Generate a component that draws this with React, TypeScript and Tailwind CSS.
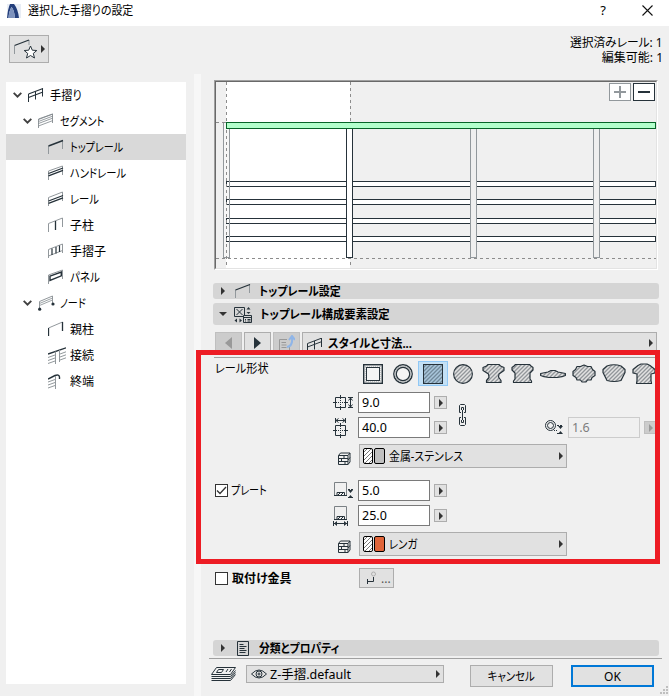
import type { ReactNode } from "react"
import clsx from "clsx"

const INK = "#26323a"
const GREY = "#92989c"

/* ---------- small icons ---------- */

function Svg({ w, h, className, children }: { w: number; h: number; className?: string; children: ReactNode }) {
  return (
    <svg width={w} height={h} viewBox={`0 0 ${w} ${h}`} fill="none" stroke={INK} className={clsx("shrink-0", className)}>
      {children}
    </svg>
  )
}

function Chevron() {
  return (
    <Svg w={9} h={6}>
      <path d="M.7 .9 4.5 4.6 8.3 .9" strokeWidth="1.9" stroke="#404040" />
    </Svg>
  )
}

function RightArrow({ className, fill = "#333" }: { className?: string; fill?: string }) {
  return (
    <svg width="4" height="8" viewBox="0 0 4 8" className={clsx("shrink-0", className)}>
      <path d="M0 0 4 4 0 8Z" fill={fill} />
    </svg>
  )
}

const treeIcons: Record<string, ReactNode> = {
  railing: (
    <>
      <path d="M.5 15V7M14.5 1.500v8M7.500 4v8.500" />
      <path d="M.5 7 15 1.500M.5 10.500 15 5" strokeWidth="1.2" />
    </>
  ),
  segment: (
    <>
      <path d="M.5 15V6L14.5 1v9" stroke={GREY} />
      <path d="M.5 6.500 15 1M.5 8.500 15 3M.5 10.500 15 5M.5 13 15 7.500" stroke="#7d858a" strokeWidth=".8" />
    </>
  ),
  topRail: (
    <>
      <path d="M.5 15V7M14.5 1v9" stroke={GREY} />
      <path d="M.5 7 15 1.500" strokeWidth="1.4" />
    </>
  ),
  handrail: (
    <>
      <path d="M.5 15V6L14.5 1v9" stroke={GREY} />
      <path d="M.5 8.500 15 3M.5 10.800 15 5.300" strokeWidth="1.3" />
    </>
  ),
  rail: (
    <>
      <path d="M.5 15V6.500L14.5 1v9" stroke={GREY} />
      <path d="M.5 10 15 4.500M.5 12.300 15 6.800" strokeWidth="1.3" />
    </>
  ),
  post: (
    <>
      <path d="M.5 15V6.500L14.5 1v9" stroke={GREY} />
      <path d="M7.500 4v9" strokeWidth="1.3" />
    </>
  ),
  baluster: (
    <>
      <path d="M.5 15V6.500L14.5 1v9M.5 13 14.5 7.500" stroke={GREY} />
      <path d="M4 5.500v6.500M8 4v6.500M11.500 2.500v6.500" strokeWidth="1.2" />
    </>
  ),
  panel: (
    <>
      <path d="M.5 15V6L14.5 1v9" stroke={GREY} />
      <path d="M2 7.200 13.300 3v3.800L2 11.400Z" strokeWidth="1.4" />
    </>
  ),
  node: (
    <>
      <path d="M1.500 14V6.500L14.5 1v8" stroke={GREY} />
      <path d="M1.500 8.500 14.5 3M1.500 10.500 14.5 5" stroke={GREY} strokeWidth=".9" />
      <circle cx="1.7" cy="14.2" r="1.6" fill={INK} stroke="none" />
      <circle cx="15" cy="9" r="1.6" fill={INK} stroke="none" />
    </>
  ),
  newel: (
    <>
      <path d="M.5 7 14.5 1" stroke={GREY} />
      <path d="M.5 15V7M14.5 1v9" strokeWidth="1.3" />
    </>
  ),
  joint: (
    <>
      <path d="M0 7 18 .8" strokeWidth="1.4" />
      <path d="M7.500 4.500V17M11.500 3v12" stroke={GREY} />
      <path d="M0 10.500 7 8M0 13.500 7 11M0 16.500 7 14M12 7l6-2.200M12 10l6-2.200M12 13l6-2.200" stroke="#858c90" strokeWidth=".9" />
    </>
  ),
  end: (
    <>
      <path d="M0 6 7 2.500q4-1.500 4.500 1.500v2" strokeWidth="1.4" />
      <path d="M7.500 3v13" stroke={GREY} />
      <path d="M0 9 7 6.500M0 12 7 9.500M0 15 7 12.500" stroke="#858c90" strokeWidth=".9" />
    </>
  ),
}

function BrickIcon() {
  return (
    <Svg w={13} h={13} className="relative top-[2px]">
      <path d="M.5 3.500h9.500v9H.5ZM.5 3.500 2.500 1H12v9l-2 2.500M10 3.500 12 1M.5 6.500H10M.5 9.500H10M6 3.500v3M3.500 6.500v3M7 9.500v3M10 8l2-2.500" strokeWidth="1" />
    </Svg>
  )
}

/* ---------- generic controls ---------- */

function NumberField({ value, disabled }: { value: string; disabled?: boolean }) {
  return (
    <div className="flex items-center gap-1">
      <div
        className={clsx(
          "flex h-[21px] w-[72px] items-center border pl-[3px] text-[12.5px]",
          disabled ? "border-[#ccc] text-[#7d7d7d]" : "border-[#7a7a7a] bg-white",
        )}
      >
        {value}
      </div>
      <button
        className={clsx(
          "flex size-[13px] items-center justify-center border",
          disabled ? "border-[#bfbfbf] bg-[#ccc]" : "border-[#adadad] bg-[#e1e1e1]",
        )}
      >
        <RightArrow fill={disabled ? "#999" : "#333"} />
      </button>
    </div>
  )
}

function MaterialSelect({ id, label, color, cls }: { id: string; label: string; color: string; cls: string }) {
  return (
    <button className="flex h-6 w-[208px] items-center border border-[#adadad] bg-[#e1e1e1] pr-[3px] pl-[3px]">
      <svg width="22" height="16" viewBox="0 0 22 16" className="mr-1 shrink-0">
        <clipPath id={id}>
          <rect x="1" y="1" width="8" height="14" rx="1" />
        </clipPath>
        <rect x=".5" y=".5" width="9" height="15" rx="1.5" fill="#fff" />
        <path d="M-2 7 8-3M-2 11 12-3M-2 15 12 1M-2 19 12 5M2 19 12 9M6 19l6-6" stroke="#555" strokeWidth=".8" clipPath={`url(#${id})`} />
        <rect x=".5" y=".5" width="9" height="15" rx="1.5" fill="none" stroke="#000" />
        <rect x="11.5" y=".5" width="10" height="15" rx="1.5" fill={color} stroke="#000" />
      </svg>
      <span className={cls}>{label}</span>
      <RightArrow className="ml-auto" />
    </button>
  )
}

function CheckBox({ checked }: { checked?: boolean }) {
  return (
    <span className="flex size-[13px] shrink-0 items-center justify-center border border-[#333] bg-white">
      {checked && (
        <Svg w={11} h={9}>
          <path d="M1 4.500 4 7.500 10 1" stroke="#333" strokeWidth="1.3" />
        </Svg>
      )}
    </span>
  )
}

/* ---------- tree ---------- */

const tree = [
  { icon: "railing", label: "手摺り", level: 0, cls: "scale-x-[.93]" },
  { icon: "segment", label: "セグメント", level: 1, cls: "scale-x-[.84]" },
  { icon: "topRail", label: "トップレール", level: 2, cls: "scale-x-[.84]", selected: true },
  { icon: "handrail", label: "ハンドレール", level: 2, cls: "scale-x-[.86]" },
  { icon: "rail", label: "レール", level: 2, cls: "scale-x-[.86]" },
  { icon: "post", label: "子柱", level: 2, cls: "" },
  { icon: "baluster", label: "手摺子", level: 2, cls: "" },
  { icon: "panel", label: "パネル", level: 2, cls: "scale-x-[.88]" },
  { icon: "node", label: "ノード", level: 1, cls: "scale-x-[.84]" },
  { icon: "newel", label: "親柱", level: 2, cls: "" },
  { icon: "joint", label: "接続", level: 2, cls: "" },
  { icon: "end", label: "終端", level: 2, cls: "" },
]

function Tree() {
  return (
    <nav className="mt-2 ml-1.5 h-[602px] w-[180px] shrink-0 bg-white">
      {tree.map(({ icon, label, level, cls, selected }) => (
        <div
          key={label}
          className={clsx(
            "flex h-[26px] items-center",
            level === 0 && "pl-[7px]",
            level === 1 && "pl-[17px]",
            level === 2 && "pl-[42px]",
            selected && "bg-[#d9d9d9]",
          )}
        >
          {level < 2 && <span className="mr-1.5"><Chevron /></span>}
          <Svg w={18} h={18} className="relative top-px mr-1">
            {treeIcons[icon]}
          </Svg>
          <span className={clsx("origin-left", cls)}>{label}</span>
        </div>
      ))}
    </nav>
  )
}

/* ---------- preview ---------- */

function Preview() {
  return (
    <div className="ml-[13px] h-[190px] w-[444px] shrink-0 border border-t-[#a0a0a0] border-r-white border-b-white border-l-[#a0a0a0]">
      <div className="relative flex h-full items-start justify-end gap-0.5 border border-t-[#696969] border-r-[#e3e3e3] border-b-[#e3e3e3] border-l-[#696969] pt-px pr-px">
        <svg width="440" height="186" viewBox="216 82 440 186" shapeRendering="crispEdges" fill="none" className="absolute top-0 left-0">
          <rect x="226" y="82" width="124" height="186" fill="#fff" />
          <rect x="223.5" y="122.5" width="6" height="135" stroke={GREY} fill="#f6f6f6" />
          {[181, 199, 218, 236].map((y) => (
            <rect key={y} x="226.5" y={y + 0.5} width="429" height="5" fill="#fff" stroke={INK} />
          ))}
          <path d="M229.5 129v129" stroke={GREY} />
          <path d="M350.5 82v186M226.5 82v186" stroke="#8c8c8c" strokeDasharray="3 3" />
          <path d="M216 122.5h10M216 258.5h440" stroke="#8c8c8c" strokeDasharray="3 3" />
          <rect x="346.5" y="128.5" width="6" height="129" fill="#fff" stroke={INK} />
          <rect x="470.5" y="128.5" width="6" height="129" fill="#efefef" stroke={GREY} />
          <rect x="593.5" y="128.5" width="6" height="129" fill="#efefef" stroke={GREY} />
          <rect x="226.5" y="122.5" width="429" height="6" fill="#b3ffcc" stroke="#066428" />
        </svg>
        <button className="relative flex h-[18px] w-[22px] items-center justify-center border border-[#92989c] bg-white">
          <Svg w={12} h={12}>
            <path d="M0 6h12M6 0v12" stroke={GREY} strokeWidth="2" />
          </Svg>
        </button>
        <button className="relative flex h-[18px] w-[22px] items-center justify-center border border-[#26323a] bg-white">
          <span className="h-0.5 w-3 bg-[#26323a]" />
        </button>
      </div>
    </div>
  )
}

/* ---------- rail profiles ---------- */

const profiles = [
  { w: 23, d: "M6 1.500h11l1.500 1.500 3.500 1.500v3l-5 3.500-.5 3 2.500 3.500v2h-14.500v-2L7 14.500 6.500 11 1 7.500v-3l3.500-1.500Z" },
  { w: 23, d: "M4.500 1.500h14l1.500 1.500 2 1.500v2.500l-3 3v6l1.500 2v1.500h-18v-1.500l1.500-2v-6L1 7V4.500l2-1.500Z" },
  { w: 26, d: "M.6 10.500 8 9l3-1.500h4L18 9l7.400 1.500v2l-3.400 1.200-5 .8H9l-5-.8-3.400-1.200Z" },
  { w: 24, d: "M8.500 3.500 12 2l3.500 1.500H19l1.500 3 2.500 2v4l-3 2-1 2.500h-3.500L14 19h-4l-1.500-2H5l-1-2.500-3-2v-4l2.500-2 1.500-3Z" },
  { w: 24, d: "M5 3q7-2.500 14 0l4 3.500v3l-4 8q-7 2-14 0L1 9.500v-3Z" },
  { w: 24, d: "M6 2.500 9 1h6l3 1.500 5 4v3.500l-4 1v6.500l.5 3h-15l.5-3V11l-4-1V6.500Z" },
]

function HatchDefs() {
  return (
    <svg width="0" height="0" className="absolute">
      <pattern id="hatch" width="4" height="4" patternUnits="userSpaceOnUse">
        <rect width="4" height="4" fill="#e2e2e2" />
        <path d="M-1 5 5-1M-1 1 1-1M3 5 5 3" stroke="#92969a" strokeWidth="1.3" />
      </pattern>
      <pattern id="hatchBlue" width="4" height="4" patternUnits="userSpaceOnUse">
        <rect width="4" height="4" fill="#a9c6db" />
        <path d="M-1 5 5-1M-1 1 1-1M3 5 5 3" stroke="#71899a" strokeWidth="1.3" />
      </pattern>
    </svg>
  )
}

function ShapePicker() {
  return (
    <div className="flex items-center">
      <Svg w={20} h={20} className="mr-[10px]">
        <rect x=".7" y=".7" width="18.6" height="18.6" strokeWidth="1.4" />
        <rect x="2" y="2" width="16" height="16" stroke="#9aa0a3" strokeDasharray="1 1" />
        <rect x="3.5" y="3.5" width="13" height="13" fill="#f4f4f4" />
      </Svg>
      <Svg w={20} h={20} className="mr-[5px]">
        <circle cx="10" cy="10" r="9.2" strokeWidth="1.4" />
        <circle cx="10" cy="10" r="8" stroke="#b5b9bb" />
        <circle cx="10" cy="10" r="6.7" strokeWidth="1.2" fill="#f4f4f4" />
      </Svg>
      <span className="mr-[5px] flex h-[25px] w-[30px] items-center justify-center border border-[#90c8f6] bg-[#c3e0f5]">
        <Svg w={20} h={20}>
          <rect x=".5" y=".5" width="19" height="19" fill="url(#hatchBlue)" />
        </Svg>
      </span>
      <Svg w={20} h={20} className="mr-[9px]">
        <circle cx="10" cy="10" r="9.4" fill="url(#hatch)" strokeWidth="1.1" />
      </Svg>
      <div className="flex gap-[6px]">
        {profiles.map(({ w, d }, i) => (
          <Svg key={i} w={w} h={22}>
            <path d={d} fill="url(#hatch)" strokeWidth="1.2" strokeLinejoin="round" />
          </Svg>
        ))}
      </div>
    </div>
  )
}

/* ---------- dimension icons ---------- */

function HeightIcon() {
  return (
    <Svg w={21} h={15}>
      <path d="M2.500 2.500h10v10h-10ZM7.500 0v4M7.500 11v4M0 7.500h4M11 7.500h4" />
      <path d="M5 7.500h6M7.500 5v6" strokeDasharray="1 1" />
      <path d="M15 2.500h5M15 12.500h5M17.500 3v9M15.500 5.500l2-2.500 2 2.500M15.500 9.500l2 2.500 2-2.500" />
    </Svg>
  )
}

function WidthIcon() {
  return (
    <Svg w={15} h={20}>
      <path d="M2.500 7.500h10v10h-10ZM7.500 5v4M7.500 16v4M0 12.500h4M11 12.500h4" />
      <path d="M5 12.500h6M7.500 10v6" strokeDasharray="1 1" />
      <path d="M2.500 0v5M12.500 0v5M3 2.500h9M5.500.5 3 2.500l2.500 2M9.500.5 12 2.500l-2.500 2" />
    </Svg>
  )
}

function PlateHeightIcon() {
  return (
    <Svg w={19} h={17}>
      <path d="M.5 13V.5h12V13" stroke="#7b8185" />
      <path d="M0 13.500h13M3 10.500h7.500v3H3ZM4 13l2-2M7 13l2-2" />
      <path d="M14 7.500h5M14 15.500h5" strokeDasharray="2 1" />
      <path d="M14 8h5l-2.500 3ZM14 16h5l-2.500-3Z" fill={INK} stroke="none" />
    </Svg>
  )
}

function PlateWidthIcon() {
  return (
    <Svg w={15} h={20}>
      <path d="M1.500 13V.5h12V13" stroke="#7b8185" />
      <path d="M1 13.500h13M4 10.500h7.500v3H4ZM5 13l2-2M8 13l2-2" />
      <path d="M.5 15v5M14.5 15v5M1 17.500h13" />
      <path d="M1 17.500 4 15v5ZM14 17.500 11 15v5Z" fill={INK} stroke="none" />
    </Svg>
  )
}

function ThicknessIcon() {
  return (
    <Svg w={18} h={15}>
      <circle cx="5.5" cy="5.5" r="5" />
      <circle cx="5.5" cy="5.5" r="3" />
      <path d="M9 10.500h4" strokeDasharray="1 1" />
      <path d="M12 5.500h6M12 13.500h6" strokeDasharray="2 1" />
      <path d="M13 6h5l-2.500 3ZM13 14h5l-2.500-3Z" fill={INK} stroke="none" />
    </Svg>
  )
}

function ChainIcon() {
  return (
    <Svg w={7} h={22}>
      <path d="M2 8.500H.5V1.500l1-1h4l1 1v7H5M2 13.500H.5v7l1 1h4l1-1v-7H5M2.500 6V3.500h2V6M2.500 16v2.500h2V16M3.500 6v10" />
    </Svg>
  )
}

function FieldRow({ icon, value }: { icon: ReactNode; value: string }) {
  return (
    <div className="flex h-[21px] items-center">
      <span className="flex w-[25px] shrink-0">{icon}</span>
      <NumberField value={value} />
    </div>
  )
}

function SectionBar({ children, className }: { children: ReactNode; className?: string }) {
  return (
    <div className={clsx("ml-3 flex w-[446px] shrink-0 items-center rounded-[3px] bg-[#d5d5d5] pl-2.5 font-bold", className)}>
      {children}
    </div>
  )
}

/* ---------- settings panel ---------- */

function Settings() {
  return (
    <div className="flex w-[468px] flex-col pt-1.5">
      <Preview />

      <SectionBar className="mt-[13px] h-4">
        <RightArrow className="-ml-0.5" />
        <Svg w={16} h={16} className="mr-2 ml-[10px]">
          <path d="M.5 15V7M14.5 1v9" stroke={GREY} />
          <path d="M.5 7 15 1.500" strokeWidth="1.3" />
        </Svg>
        <span className="origin-left scale-x-[.91]">トップレール設定</span>
      </SectionBar>

      <SectionBar className="mt-1 h-[22px]">
        <svg width="8" height="4" viewBox="0 0 8 4" className="-ml-1 shrink-0">
          <path d="M0 0h8L4 4Z" fill="#333" />
        </svg>
        <Svg w={18} h={17} className="mr-2 ml-[7px]">
          <path d="M.5 1.500h10v9H.5ZM2.500 3l6 6M8.500 3l-6 6" />
          <path d="M12.500 3.500 14.5 1 16.500 3.500ZM12.500 6 14.5 8 16.500 6ZM3 12.500.5 14.5 3 16.500ZM5.500 12.500 8 14.5 5.500 16.500Z" fill={INK} stroke="none" />
          <path d="M9.500 9.500h8v7h-8ZM9.500 11.500h8M11 13.500h1M13.500 13.500h3M11 15h1M13.500 15h3" fill="#d5d5d5" />
        </Svg>
        <span className="origin-left scale-x-[.94]">トップレール構成要素設定</span>
      </SectionBar>

      <div className="mt-[7px] ml-[14px] flex h-[22px] shrink-0 gap-0.5">
        <button className="flex w-[27px] items-center justify-center border border-[#bfbfbf] bg-[#ccc]">
          <svg width="7" height="12" viewBox="0 0 7 12"><path d="M7 0v12L0 6Z" fill="#999" /></svg>
        </button>
        <button className="flex w-[27px] items-center justify-center border border-[#adadad] bg-[#e1e1e1]">
          <svg width="7" height="12" viewBox="0 0 7 12"><path d="M0 0v12l7-6Z" fill="#26323a" /></svg>
        </button>
        <button className="flex w-[27px] items-center justify-center border border-[#bfbfbf] bg-[#ccc]">
          <Svg w={16} h={16}>
            <path d="M8 4.500H.5v11h10V11M2.500 7.500H7M2.500 10h5M2.500 12.500h5" stroke="#999" />
            <path d="M8 12q6-1 5-9M10 5l3-4 3 4" stroke="#8fb5e8" strokeWidth="2" />
          </Svg>
        </button>
        <button className="flex w-[355px] items-center border border-[#adadad] bg-[#e1e1e1] pr-[3px] pl-1 font-bold">
          <Svg w={16} h={16} className="relative top-[3px] mr-[5px]">
            <path d="M.5 13V5.500M14.5 0v9M7.500 3v8.500M.5 5.500 15 0M.5 9 15 3.500" />
            <path d="M3 14.500h11M6 12l-3 2.500 3 2.500M11 12l3 2.500-3 2.500" />
          </Svg>
          <span className="origin-left scale-x-[.945]">スタイルと寸法...</span>
          <RightArrow className="ml-auto" />
        </button>
      </div>
      <div className="mt-[3px] ml-[13px] h-px w-[442px] shrink-0 bg-[#a0a0a0]" />

      <div className="mt-[3px] flex h-[25px] pl-[14px]">
        <span className="w-[148px] shrink-0 origin-left scale-x-[.93]">レール形状</span>
        <ShapePicker />
      </div>

      <div className="mt-1.5 flex">
        <div className="flex flex-col gap-1 pl-[132px]">
          <FieldRow icon={<HeightIcon />} value="9.0" />
          <FieldRow icon={<WidthIcon />} value="40.0" />
        </div>
        <div className="mt-3 ml-3"><ChainIcon /></div>
        <div className="mt-[25px] ml-auto flex items-center gap-[5px] pr-3">
          <ThicknessIcon />
          <NumberField value="1.6" disabled />
        </div>
      </div>

      <div className="mt-1.5 flex items-center gap-2 pl-[137px]">
        <BrickIcon />
        <MaterialSelect id="cutSteel" label="金属-ステンレス" color="#c0c0c0" cls="origin-left scale-x-[.91]" />
      </div>

      <div className="mt-3 flex pl-[14px]">
        <label className="flex h-[21px] w-[118px] items-center gap-[3px]">
          <CheckBox checked />
          <span className="origin-left scale-x-[.84]">プレート</span>
        </label>
        <div className="flex flex-col gap-1">
          <FieldRow icon={<span className="ml-px"><PlateHeightIcon /></span>} value="5.0" />
          <FieldRow icon={<PlateWidthIcon />} value="25.0" />
        </div>
      </div>

      <div className="mt-1.5 flex items-center gap-2 pl-[137px]">
        <BrickIcon />
        <MaterialSelect id="cutBrick" label="レンガ" color="#e0653a" cls="origin-left scale-x-[.87]" />
      </div>

      <div className="mt-3 flex h-5 items-center pl-[14px]">
        <label className="flex w-[144px] items-center gap-1 font-bold">
          <CheckBox />
          取付け金具
        </label>
        <button className="flex h-5 w-[35px] items-center border border-[#adadad] bg-[#e1e1e1] pl-[7px] text-[#555]">
          <Svg w={10} h={14} className="mr-1">
            <circle cx="6.5" cy="3" r="2" stroke="#b0b0b0" />
            <path d="M6.500 6v4.500H.5M.5 8v5" />
          </Svg>
          ...
        </button>
      </div>

      <SectionBar className="mt-[52px] h-4">
        <RightArrow className="-ml-0.5" />
        <Svg w={12} h={15} className="mr-[10px] ml-3">
          <path d="M.5.5h11v14H.5ZM2.500 3.500h4M2.500 5.500h7M2.500 7.500h5M2.500 9.500h7M2.500 11.500h6" />
        </Svg>
        <span className="origin-left scale-x-[.9]">分類とプロパティ</span>
      </SectionBar>
      <div className="mt-0.5 ml-2 h-px w-[453px] shrink-0 bg-[#a0a0a0]" />

      <div className="mt-1.5 flex items-start pl-[10px]">
        <Svg w={25} h={16} className="mt-px mr-[10px]">
          <path d="M.5 8.500 5.500 1.500h19l-5 7ZM.5 10.500h19l5-6M.5 12.500h19l5-6M.5 14.5h19l5-6" />
          <path d="M7.500 3.500h5l-2 3h-5ZM15 6l2-3M18.500 6l2-3" />
        </Svg>
        <button className="flex h-[18px] w-[198px] items-center border border-[#adadad] bg-[#e1e1e1] pr-[3px] pl-1 text-[12.5px]">
          <Svg w={16} h={10} className="mr-[3px]">
            <path d="M.5 5Q8-3 15.500 5 8 13 .5 5Z" />
            <circle cx="8" cy="5" r="3" />
            <circle cx="8" cy="5" r="1" />
          </Svg>
          Z-手摺.default
          <RightArrow className="ml-auto" />
        </button>
        <button className="ml-[26px] flex h-[22px] w-[83px] items-center justify-center border border-[#adadad] bg-[#e1e1e1]">
          <span className="scale-x-[.87]">キャンセル</span>
        </button>
        <button className="ml-[18px] flex h-[22px] w-[83px] items-center justify-center border-2 border-[#0078d7] bg-[#e1e1e1]">
          OK
        </button>
      </div>
    </div>
  )
}

/* ---------- window ---------- */

export default function App() {
  return (
    <div className="relative h-[696px] w-[669px] overflow-hidden bg-[#f0f0f0] font-['Noto_Sans','Noto_Sans_CJK_JP',sans-serif] text-[12px] leading-[15px] whitespace-nowrap text-black [font-feature-settings:'palt']">
      <HatchDefs />

      <header className="flex h-[26px] items-center bg-white pb-[5px] pl-[7px]">
        <svg width="14" height="14" viewBox="0 0 14 14" className="mr-[7px]">
          <rect width="14" height="14" fill="#e8edf5" />
          <path d="M0 14Q1 4 3 0h4q4 5 5 14H8Q7 5 4.500 3 2 7 1.500 14Z" fill="#243f7c" />
          <path d="M1.500 14Q2 7 4.500 3 7 5 8 14Z" fill="#7d92bd" />
        </svg>
        <h1 className="origin-left scale-x-[.915]">選択した手摺りの設定</h1>
        <span className="ml-auto text-[13px]">?</span>
        <Svg w={11} h={11} className="mr-[16px] ml-[36px]">
          <path d="m.5.5 10 10M10.500.5l-10 10" stroke="#111" strokeWidth="1.1" />
        </Svg>
      </header>

      <div className="flex h-12 items-start justify-between pt-[9px] pr-[6px] pl-[9px]">
        <button className="flex h-[28px] w-10 items-center border border-[#adadad] bg-[#e1e1e1] pl-1">
          <Svg w={23} h={20}>
            <path d="M.5 15V7M15 1v5" stroke={GREY} />
            <path d="M.5 6.500 15 1" strokeWidth="1.3" />
            <path d="m16.500 7 1.800 4.200 4.500.3-3.500 2.900 1.200 4.600-4-2.500-4 2.500 1.200-4.600-3.500-2.900 4.500-.3Z" fill="#fff" />
          </Svg>
          <RightArrow className="ml-1" />
        </button>
        <div className="text-right">
          <p className="origin-right scale-x-[.98]">選択済みレール: 1</p>
          <p>編集可能: 1</p>
        </div>
      </div>

      <div className="flex h-[622px]">
        <Tree />
        <div className="ml-2 w-[7px] shrink-0 bg-[#f7f7f7]" />
        <Settings />
      </div>

      {/* Callout around the component settings */}
      <div className="pointer-events-none absolute top-[350px] left-[196px] h-[214px] w-[464px] border-5 border-[#ed1c24]" />

      {/* Resize grip */}
      <svg width="8" height="8" viewBox="0 0 8 8" fill="#bfbfbf" className="absolute right-px bottom-0.5">
        <path d="M6 0h2v2H6ZM6 3h2v2H6ZM3 3h2v2H3ZM6 6h2v2H6ZM3 6h2v2H3ZM0 6h2v2H0Z" />
      </svg>
    </div>
  )
}
